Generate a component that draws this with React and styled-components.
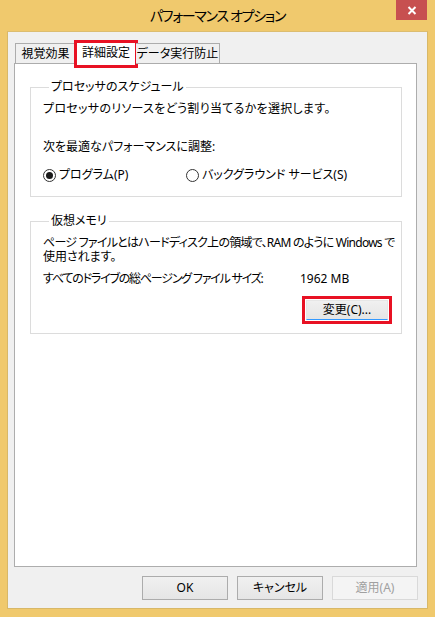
import React from "react";
import styled, { createGlobalStyle } from "styled-components";

const GlobalStyle = createGlobalStyle`
  html, body {
    margin: 0;
    padding: 0;
    background: #ffffff;
  }
  body {
    font-family: "Noto Sans", "Noto Sans CJK JP", sans-serif;
    font-size: 12px;
    color: #000;
    font-feature-settings: "palt";
  }
`;

const Window = styled.div`
  width: 435px;
  height: 617px;
  box-sizing: border-box;
  background: #f0c96d;
  display: flex;
  flex-direction: column;
`;

const TitleBar = styled.div`
  height: 31px;
  display: flex;
  justify-content: center;
  align-items: flex-start;
  position: relative;
`;

const Title = styled.div`
  font-size: 14px;
  letter-spacing: -1.3px;
  line-height: 31px;
  padding-left: 0;
  color: #000;
`;

const CloseButton = styled.div`
  position: absolute;
  top: 0;
  right: 8px;
  width: 31px;
  height: 20px;
  background: #c75050;
  display: flex;
  align-items: center;
  justify-content: center;
`;

const Body = styled.div`
  flex: 1;
  margin: 0 7px 8px 7px;
  background: #f0f0f0;
  border: 1px solid #d8b868;
  border-top-color: #dcbd70;
  display: flex;
  flex-direction: column;
  padding: 9px 10px 8px 6px;
`;

const TabStrip = styled.div`
  display: flex;
  align-items: flex-end;
  height: 23px;
  margin-left: 1px;
  position: relative;
  z-index: 1;
`;

const Tab = styled.div`
  box-sizing: border-box;
  width: ${(p) => p.$w}px;
  height: ${(p) => (p.$active ? 24 : 21)}px;
  margin: ${(p) => (p.$active ? "0 -1px -1px -1px" : "0 0 0 0")};
  background: ${(p) => (p.$active ? "#ffffff" : "#f0f0f0")};
  border: 1px solid #acacac;
  border-bottom: ${(p) => (p.$active ? "none" : "1px solid #acacac")};
  border-left: ${(p) => (p.$first || p.$active ? "1px solid #acacac" : "none")};
  display: flex;
  align-items: center;
  justify-content: center;
  line-height: 16px;
  position: relative;
  padding-bottom: ${(p) => (p.$active ? 1 : 0)}px;

  &::after {
    content: "";
    display: ${(p) => (p.$mark ? "block" : "none")};
    position: absolute;
    left: -2px;
    top: -2px;
    width: 64px;
    height: 28px;
    box-sizing: border-box;
    border: 3px solid #e81123;
  }
`;

const Panel = styled.div`
  flex: 1;
  background: #ffffff;
  border: 1px solid #adadad;
  margin-top: -1px;
  padding: 15px 14px 0 15px;
  display: flex;
  flex-direction: column;
`;

const Group = styled.fieldset`
  margin: ${(p) => p.$mt || 0}px 0 0 0;
  padding: ${(p) => p.$pt}px 12px ${(p) => p.$pb}px 12px;
  border: 1px solid #dcdcdc;
  min-inline-size: 0;
  display: flex;
  flex-direction: column;
`;

const Legend = styled.legend`
  margin-left: 6px;
  padding: 0 2px;
  line-height: 16px;
`;

const Line = styled.div`
  line-height: ${(p) => p.$lh || 16}px;
  margin-top: ${(p) => p.$mt || 0}px;
  letter-spacing: ${(p) => p.$ls || 0}px;
  white-space: nowrap;
`;

const RadioRow = styled.div`
  display: grid;
  grid-template-columns: 143px auto;
  margin-top: 12px;
  line-height: 16px;
`;

const RadioItem = styled.label`
  display: flex;
  align-items: center;
  gap: 3px;
  white-space: nowrap;
`;

const RadioCircle = styled.span`
  box-sizing: border-box;
  width: 13px;
  height: 13px;
  border-radius: 50%;
  border: 1px solid #333333;
  background: #ffffff;
  display: flex;
  align-items: center;
  justify-content: center;

  &::after {
    content: "";
    display: ${(p) => (p.$checked ? "block" : "none")};
    width: 7px;
    height: 7px;
    border-radius: 50%;
    background: #1a1a1a;
  }
`;

const SizeRow = styled.div`
  display: grid;
  grid-template-columns: 257px auto;
  line-height: 15px;
  margin-top: 7px;
  white-space: nowrap;
`;

const SizeLabel = styled.span`
  letter-spacing: -1.2px;
`;

const ChangeRow = styled.div`
  display: flex;
  justify-content: flex-end;
  margin-top: 10px;
  margin-right: -3px;
`;

const Highlight = styled.div`
  border: 3px solid #e81123;
  padding: 1px;
  display: flex;
`;

const Button = styled.div`
  box-sizing: border-box;
  width: ${(p) => p.$w || 86}px;
  height: ${(p) => p.$h || 24}px;
  display: flex;
  align-items: center;
  justify-content: center;
  line-height: 16px;
  background: ${(p) =>
    p.$disabled ? "#f4f4f4" : "linear-gradient(#f0f0f0, #e5e5e5)"};
  border: 1px solid ${(p) => (p.$disabled ? "#d9d9d9" : "#acacac")};
  color: ${(p) => (p.$disabled ? "#a0a0a0" : "#000")};
  ${(p) => p.$focus && "border-color: #e6e6e6; border-bottom: 1px solid #3399ff;"}
`;

const ButtonRow = styled.div`
  display: flex;
  justify-content: flex-end;
  gap: 9px;
  margin-top: 9px;
  margin-right: -1px;
`;

export default function App() {
  return (
    <>
      <GlobalStyle />
      <Window>
        <TitleBar>
          <Title>パフォーマンス オプション</Title>
          <CloseButton>
            <svg width="10" height="9" viewBox="0 0 10 9">
              <path d="M1.5 1 L8.5 8 M8.5 1 L1.5 8" stroke="#fff" strokeWidth="2" />
            </svg>
          </CloseButton>
        </TitleBar>
        <Body>
          <TabStrip>
            <Tab $w={61} $first>視覚効果</Tab>
            <Tab $w={62} $active $mark>詳細設定</Tab>
            <Tab $w={84}>データ実行防止</Tab>
          </TabStrip>
          <Panel>
            <Group $pt={6} $pb={13}>
              <Legend>プロセッサのスケジュール</Legend>
              <Line $ls={0.3}>プロセッサのリソースをどう割り当てるかを選択します。</Line>
              <Line $mt={22}>次を最適なパフォーマンスに調整:</Line>
              <RadioRow>
                <RadioItem>
                  <RadioCircle $checked />
                  プログラム(P)
                </RadioItem>
                <RadioItem>
                  <RadioCircle />
                  バックグラウンド サービス(S)
                </RadioItem>
              </RadioRow>
            </Group>
            <Group $mt={16} $pt={7} $pb={9}>
              <Legend>仮想メモリ</Legend>
              <Line $lh={14} $ls={-0.75}>
                ページ ファイルとはハードディスク上の領域で、RAM のように Windows で
              </Line>
              <Line $lh={14}>使用されます。</Line>
              <SizeRow>
                <SizeLabel>すべてのドライブの総ページング ファイル サイズ:</SizeLabel>
                <span>1962 MB</span>
              </SizeRow>
              <ChangeRow>
                <Highlight>
                  <Button $w={82} $h={20} $focus>
                    変更(C)...
                  </Button>
                </Highlight>
              </ChangeRow>
            </Group>
          </Panel>
          <ButtonRow>
            <Button>OK</Button>
            <Button>キャンセル</Button>
            <Button $disabled>適用(A)</Button>
          </ButtonRow>
        </Body>
      </Window>
    </>
  );
}
